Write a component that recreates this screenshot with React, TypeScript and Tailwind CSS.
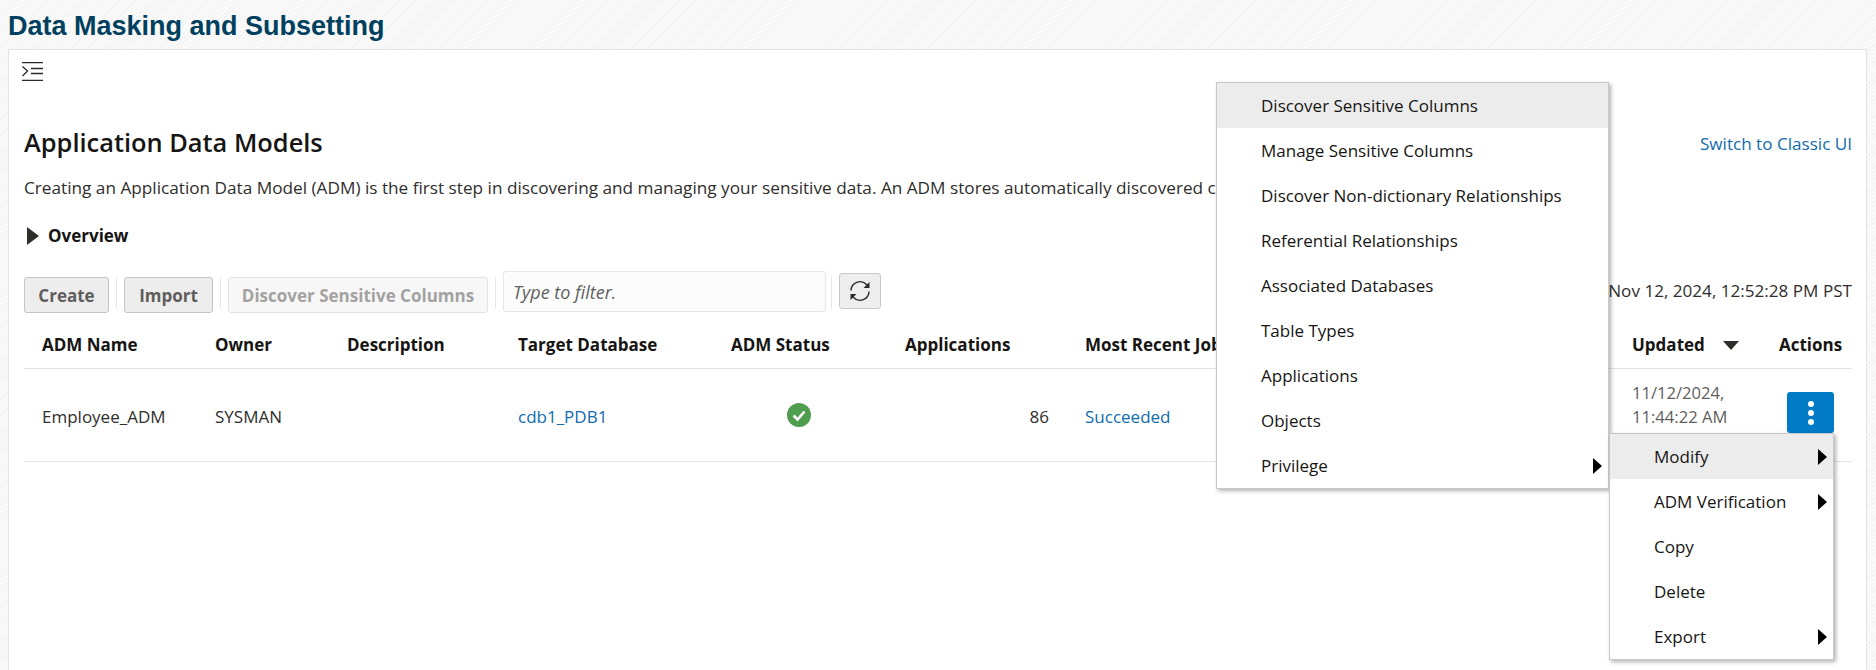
import React from "react";

const font = { fontFamily: '"Open Sans", "Noto Sans", sans-serif' };

const Caret = () => (
  <svg width="9" height="16" viewBox="0 0 9 16" className="shrink-0">
    <path d="M0 0 L9 8 L0 16 Z" fill="#000" />
  </svg>
);

const Sep = () => <div className="w-px h-[32px] mt-[4px] bg-[#e5e5e5] mx-[7px]" />;

const columns = [
  { label: "ADM Name", cls: "w-[191px] pl-[18px]" },
  { label: "Owner", cls: "w-[132px]" },
  { label: "Description", cls: "w-[171px]" },
  { label: "Target Database", cls: "w-[213px]" },
  { label: "ADM Status", cls: "w-[174px]" },
  { label: "Applications", cls: "w-[180px]" },
  { label: "Most Recent Job", cls: "w-[547px]" },
];

const PopMenu = ({
  items,
  className,
  textPad,
}: {
  items: { label: string; sub?: boolean }[];
  className: string;
  textPad: string;
}) => (
  <div
    className={`absolute z-10 bg-white border border-[#c8c8c8] shadow-[2px_2px_4px_rgba(0,0,0,0.3)] ${className}`}
  >
    {items.map((item, index) => (
      <div
        key={item.label}
        className={`h-[45px] flex items-center justify-between ${textPad} pr-[6px] text-[17px] text-[#161513] ${
          index === 0 ? "bg-[#ececec]" : ""
        }`}
      >
        <span>{item.label}</span>
        {item.sub && <Caret />}
      </div>
    ))}
  </div>
);

export default function App() {
  return (
    <div
      className="relative w-[1876px] h-[670px] overflow-hidden bg-[repeating-linear-gradient(135deg,#f3f3f3_0px,#f3f3f3_1px,#fafafa_1px,#fafafa_3px)] px-[8px]"
      style={font}
    >
      <h1
        className="h-[49px] pt-[8px] text-[27px] leading-[36px] font-bold text-[#00405f]"
        style={{ fontFamily: '"Liberation Sans", sans-serif' }}
      >
        Data Masking and Subsetting
      </h1>

      <div className="h-[621px] w-[1859px] bg-white border border-[#e3e3e3] border-b-0">
        {/* toggle icon */}
        <div className="pl-[13px] pt-[12px] h-[51px]">
          <svg width="21" height="19" viewBox="0 0 21 19" fill="none" stroke="#2a2a2a" strokeWidth="1.3">
            <path d="M0 .7H21M0 18.3H21M9 6.5H21M9 11.5H21M.5 4.5L5.5 9L.5 14" />
          </svg>
        </div>

        <div className="pl-[15px] w-[1843px]">
          <div className="flex items-center justify-between h-[64px] pt-[20px]">
            <h2 className="text-[25.4px] mt-[-2px] font-semibold text-[#161513] leading-[32px]">
              Application Data Models
            </h2>
            <a className="text-[17.1px] mt-[1px] text-[#0f6cad]">Switch to Classic UI</a>
          </div>

          <p className="text-[17.2px] leading-[22px] mt-[12px] text-[#2f2d2b] whitespace-nowrap">
            Creating an Application Data Model (ADM) is the first step in discovering and managing your sensitive data.
            An ADM stores automatically discovered columns.
          </p>

          <div className="flex items-center gap-[9px] ml-[3px] mt-[26px] h-[22px]">
            <svg width="12" height="18" viewBox="0 0 12 18">
              <path d="M0 0 L12 9 L0 18 Z" fill="#2f2d2b" />
            </svg>
            <span className="text-[17px] font-bold text-[#161513]">Overview</span>
          </div>

          {/* toolbar */}
          <div className="flex items-center mt-[21px] h-[46px]">
            <button className="h-[36px] w-[85px] mt-[8px] pt-[1px] rounded-[3px] bg-[#ededed] border border-[#c4c4c4] text-[17px] font-bold text-[#5f5e5c]">
              Create
            </button>
            <Sep />
            <button className="h-[36px] w-[89px] mt-[8px] pt-[1px] rounded-[3px] bg-[#ededed] border border-[#c4c4c4] text-[17px] font-bold text-[#5f5e5c]">
              Import
            </button>
            <Sep />
            <button className="h-[36px] w-[260px] mt-[8px] pt-[1px] rounded-[3px] bg-[#f7f7f7] border border-[#e3e3e3] text-[17px] font-bold text-[#a3a2a0]">
              Discover Sensitive Columns
            </button>
            <Sep />
            <div className="h-[41px] w-[323px] rounded-[3px] bg-[#fcfcfc] border border-[#e5e5e5] flex items-center pl-[9px] pt-[2px] text-[18px] italic text-[#5f5e5c]">
              Type to filter.
            </div>
            <div className="w-px h-[32px] mt-[4px] bg-[#e5e5e5] ml-[5px] mr-[7px]" />
            <button className="h-[36px] w-[42px] rounded-[3px] bg-[#eeeeee] border border-[#c8c8c8] flex items-center justify-center">
              <svg width="24" height="24" viewBox="0 0 24 24" fill="none" stroke="#2a2a2a" strokeWidth="1.4">
                <path d="M3 11.5A9 9 0 0 1 18.5 5.5L20 7.5" />
                <path d="M21 12.5A9 9 0 0 1 5.5 18.5L4 16.5" />
                <path d="M21.5 3V9H15.5Z" fill="#2a2a2a" stroke="none" />
                <path d="M2.5 21V15H8.5Z" fill="#2a2a2a" stroke="none" />
              </svg>
            </button>
            <div className="ml-auto text-[17.1px] text-[#2f2d2b]">Nov 12, 2024, 12:52:28 PM PST</div>
          </div>

          {/* table header */}
          <div className="flex items-center h-[55px] pt-[8px] border-b border-[#e3e3e3] text-[17px] font-bold text-[#161513] whitespace-nowrap">
            {columns.map((col) => (
              <div key={col.label} className={col.cls}>
                {col.label}
              </div>
            ))}
            <div className="w-[147px] flex items-center gap-[18px]">
              Updated
              <svg width="16" height="9" viewBox="0 0 16 9">
                <path d="M0 0H16L8 9Z" fill="#2f2d2b" />
              </svg>
            </div>
            <div>Actions</div>
          </div>

          {/* table row */}
          <div className="flex items-center h-[93px] border-b border-[#e3e3e3] text-[17px] text-[#2f2d2b]">
            <div className="w-[191px] pl-[18px] mt-[4px]">Employee_ADM</div>
            <div className="w-[132px] mt-[4px]">SYSMAN</div>
            <div className="w-[171px]" />
            <div className="w-[213px] mt-[4px] text-[#0f6cad]">cdb1_PDB1</div>
            <div className="w-[174px] pl-[56px]">
              <svg width="24" height="24" viewBox="0 0 24 24">
                <circle cx="12" cy="12" r="12" fill="#4f9e4f" />
                <path d="M6.5 12.5L10.5 16.5L17.5 8.5" fill="none" stroke="#fff" strokeWidth="2.6" />
              </svg>
            </div>
            <div className="w-[144px] mt-[4px] text-right">86</div>
            <div className="w-[583px] pl-[36px] mt-[4px] text-[#0f6cad]">Succeeded</div>
            <div className="w-[155px] text-[16.6px] leading-[24px] mt-[-20px] text-[#5f5e5c]">
              11/12/2024,
              <br />
              11:44:22 AM
            </div>
            <button className="h-[41px] w-[47px] mt-[-5px] rounded-[3px] bg-[#027bc7] flex flex-col items-center justify-center gap-[3px]">
              <span className="w-[6px] h-[6px] rounded-full bg-white" />
              <span className="w-[6px] h-[6px] rounded-full bg-white" />
              <span className="w-[6px] h-[6px] rounded-full bg-white" />
            </button>
          </div>
        </div>
      </div>

      <PopMenu
        className="left-[1216px] top-[82px] w-[393px]"
        textPad="pl-[44px]"
        items={[
          { label: "Discover Sensitive Columns" },
          { label: "Manage Sensitive Columns" },
          { label: "Discover Non-dictionary Relationships" },
          { label: "Referential Relationships" },
          { label: "Associated Databases" },
          { label: "Table Types" },
          { label: "Applications" },
          { label: "Objects" },
          { label: "Privilege", sub: true },
        ]}
      />
      <PopMenu
        className="left-[1609px] top-[433px] w-[225px]"
        textPad="pl-[44px]"
        items={[
          { label: "Modify", sub: true },
          { label: "ADM Verification", sub: true },
          { label: "Copy" },
          { label: "Delete" },
          { label: "Export", sub: true },
        ]}
      />
    </div>
  );
}
